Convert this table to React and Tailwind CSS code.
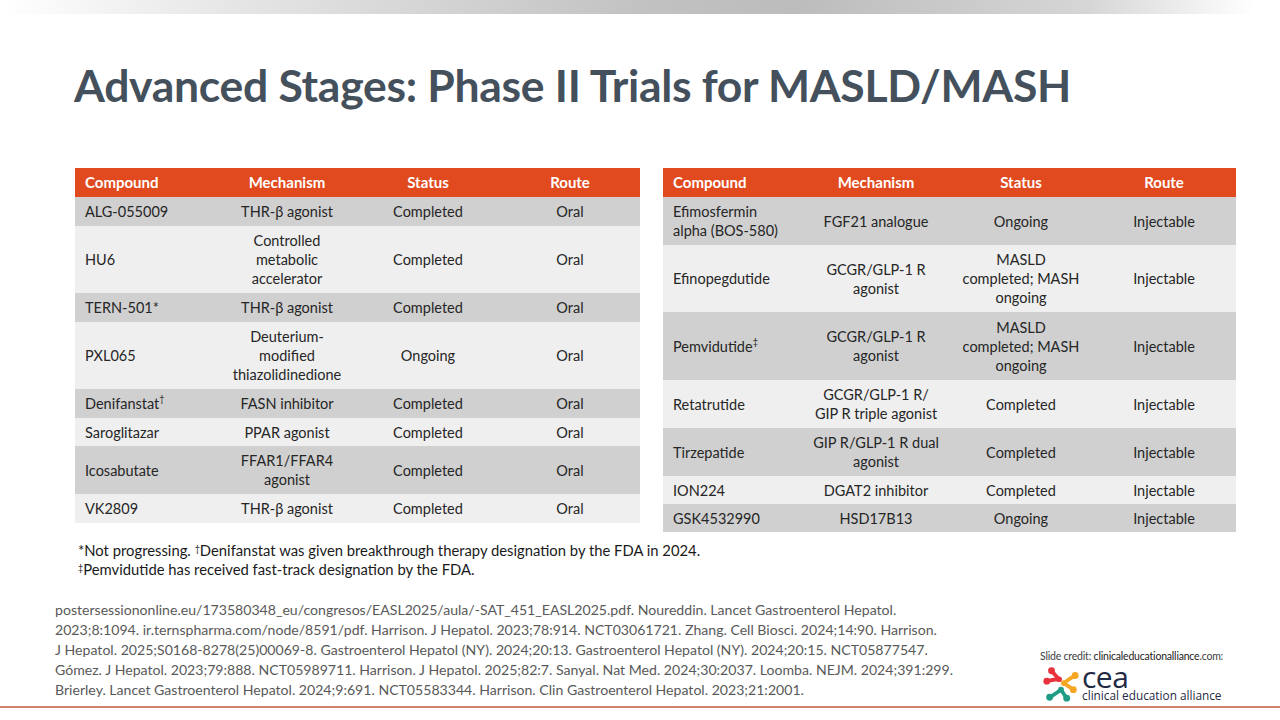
import React from "react";

const cell = "px-[10px] py-[5px] leading-[19px] flex items-center";

function Table({ cols, rows, className }) {
  return (
    <div className={className}>
      <div className="grid bg-[#E04A1E] text-white font-bold text-[15px]" style={{ gridTemplateColumns: cols }}>
        <div className={cell + " h-[29px]"}>Compound</div>
        <div className={cell + " h-[29px] justify-center"}>Mechanism</div>
        <div className={cell + " h-[29px] justify-center"}>Status</div>
        <div className={cell + " h-[29px] justify-center"}>Route</div>
      </div>
      {rows.map((r, i) => (
        <div
          key={i}
          className={"grid text-[14.5px] text-[#262626] " + (i % 2 === 0 ? "bg-[#D0D0D0]" : "bg-[#EFEFEF]")}
          style={{ gridTemplateColumns: cols, height: r.h }}
        >
          <div className={cell + " whitespace-nowrap"}>{r.c}</div>
          <div className={cell + " justify-center text-center whitespace-nowrap"}>{r.m}</div>
          <div className={cell + " justify-center text-center whitespace-nowrap"}>{r.s}</div>
          <div className={cell + " justify-center text-center"}>{r.r}</div>
        </div>
      ))}
    </div>
  );
}

const br = (...lines) =>
  lines.map((l, i) => (
    <React.Fragment key={i}>
      {l}
      {i < lines.length - 1 && <br />}
    </React.Fragment>
  ));

const leftRows = [
  { c: "ALG-055009", m: "THR-β agonist", s: "Completed", r: "Oral", h: 29 },
  { c: "HU6", m: br("Controlled", "metabolic", "accelerator"), s: "Completed", r: "Oral", h: 67 },
  { c: "TERN-501*", m: "THR-β agonist", s: "Completed", r: "Oral", h: 29 },
  { c: "PXL065", m: br("Deuterium-", "modified", "thiazolidinedione"), s: "Ongoing", r: "Oral", h: 67 },
  { c: <>Denifanstat<sup className="text-[9px]">†</sup></>, m: "FASN inhibitor", s: "Completed", r: "Oral", h: 29 },
  { c: "Saroglitazar", m: "PPAR agonist", s: "Completed", r: "Oral", h: 28 },
  { c: "Icosabutate", m: br("FFAR1/FFAR4", "agonist"), s: "Completed", r: "Oral", h: 48 },
  { c: "VK2809", m: "THR-β agonist", s: "Completed", r: "Oral", h: 29 },
];

const rightRows = [
  { c: br("Efimosfermin", "alpha (BOS-580)"), m: "FGF21 analogue", s: "Ongoing", r: "Injectable", h: 48 },
  { c: "Efinopegdutide", m: br("GCGR/GLP-1 R", "agonist"), s: br("MASLD", "completed; MASH", "ongoing"), r: "Injectable", h: 67 },
  { c: <>Pemvidutide<sup className="text-[9px]">‡</sup></>, m: br("GCGR/GLP-1 R", "agonist"), s: br("MASLD", "completed; MASH", "ongoing"), r: "Injectable", h: 68 },
  { c: "Retatrutide", m: br("GCGR/GLP-1 R/", "GIP R triple agonist"), s: "Completed", r: "Injectable", h: 48 },
  { c: "Tirzepatide", m: br("GIP R/GLP-1 R dual", "agonist"), s: "Completed", r: "Injectable", h: 48 },
  { c: "ION224", m: "DGAT2 inhibitor", s: "Completed", r: "Injectable", h: 28 },
  { c: "GSK4532990", m: "HSD17B13", s: "Ongoing", r: "Injectable", h: 28 },
];

function Logo() {
  return (
    <svg width="36" height="36" viewBox="0 0 38 38" className="shrink-0">
      <g strokeLinecap="round" fill="none" strokeWidth="4">
        <path d="M9 5 C12 9 14 11 17 14" stroke="#E8333C" />
        <path d="M4 16 C9 15 13 14 17 14" stroke="#E8333C" />
        <path d="M34 10 C29 13 26 15 22 18" stroke="#F5A623" />
        <path d="M32 25 C28 22 25 20 22 18" stroke="#F5A623" />
        <path d="M7 33 C12 30 15 28 19 25" stroke="#1E9C84" />
        <path d="M25 34 C23 31 21 28 19 25" stroke="#1E9C84" />
      </g>
      <circle cx="9" cy="5" r="3.6" fill="#E8333C" />
      <circle cx="4" cy="16" r="3.6" fill="#E8333C" />
      <circle cx="17" cy="14" r="3" fill="#E8333C" />
      <circle cx="34" cy="10" r="3.6" fill="#F5A623" />
      <circle cx="32" cy="25" r="3.6" fill="#F5A623" />
      <circle cx="22" cy="18" r="3" fill="#F5A623" />
      <circle cx="7" cy="33" r="3.6" fill="#1E9C84" />
      <circle cx="25" cy="34" r="3.6" fill="#1E9C84" />
      <circle cx="19" cy="25" r="3" fill="#1E9C84" />
    </svg>
  );
}

export default function App() {
  return (
    <div className="w-[1280px] h-[720px] bg-white overflow-hidden flex flex-col font-['Lato',sans-serif]">
      <div className="h-[14px] shrink-0 bg-[linear-gradient(to_right,#ffffff_0%,#e6e6e6_18%,#c2c2c2_50%,#bcbcbc_62%,#d6d6d6_85%,#ffffff_98%)]" />
      <h1 className="ml-[74px] mt-[43px] h-[56px] text-[44.5px] leading-[56px] font-bold text-[#44505C] tracking-[-0.3px]">
        Advanced Stages: Phase II Trials for MASLD/MASH
      </h1>
      <div className="flex items-start mt-[55px] ml-[75px] gap-[23px]">
        <Table className="w-[565px]" cols="143px 138px 144px 140px" rows={leftRows} />
        <Table className="w-[573px]" cols="139px 148px 142px 144px" rows={rightRows} />
      </div>
      <div className="ml-[78px] mt-[9px] text-[14.8px] leading-[19px] text-[#1a1a1a]">
        <div>*Not progressing. <sup className="text-[9px]">†</sup>Denifanstat was given breakthrough therapy designation by the FDA in 2024.</div>
        <div><sup className="text-[9px]">‡</sup>Pemvidutide has received fast-track designation by the FDA.</div>
      </div>
      <div className="flex mt-[21px]">
        <div className="ml-[55px] w-[940px] shrink-0 text-[14.1px] leading-[20px] text-[#595959] whitespace-nowrap">
          postersessiononline.eu/173580348_eu/congresos/EASL2025/aula/-SAT_451_EASL2025.pdf. Noureddin. Lancet Gastroenterol Hepatol.<br />
          2023;8:1094. ir.ternspharma.com/node/8591/pdf. Harrison. J Hepatol. 2023;78:914. NCT03061721. Zhang. Cell Biosci. 2024;14:90. Harrison.<br />
          J Hepatol. 2025;S0168-8278(25)00069-8. Gastroenterol Hepatol (NY). 2024;20:13. Gastroenterol Hepatol (NY). 2024;20:15. NCT05877547.<br />
          Gómez. J Hepatol. 2023;79:888. NCT05989711. Harrison. J Hepatol. 2025;82:7. Sanyal. Nat Med. 2024;30:2037. Loomba. NEJM. 2024;391:299.<br />
          Brierley. Lancet Gastroenterol Hepatol. 2024;9:691. NCT05583344. Harrison. Clin Gastroenterol Hepatol. 2023;21:2001.
        </div>
        <div className="ml-[45px] mt-[50px] flex flex-col">
          <div className="text-[10.5px] leading-[12px] text-[#404040] tracking-[-0.2px] whitespace-nowrap">
            Slide credit: <span className="text-[#222]">clinicaleducationalliance</span>.com:
          </div>
          <div className="flex items-start mt-[4px] ml-[3px]">
            <Logo />
            <div className="ml-[3px] flex flex-col">
              <div className="text-[30px] leading-[22px] text-[#1F2A44] font-['Open_Sans',sans-serif] font-medium tracking-[-0.5px]">cea</div>
              <div className="text-[11.8px] leading-[13px] text-[#1F2A44] font-['Open_Sans',sans-serif] mt-[1px] whitespace-nowrap">clinical education alliance</div>
            </div>
          </div>
        </div>
      </div>
      <div className="mt-auto mb-[12px] h-[2px] shrink-0 bg-[#D4846A]" />
    </div>
  );
}
